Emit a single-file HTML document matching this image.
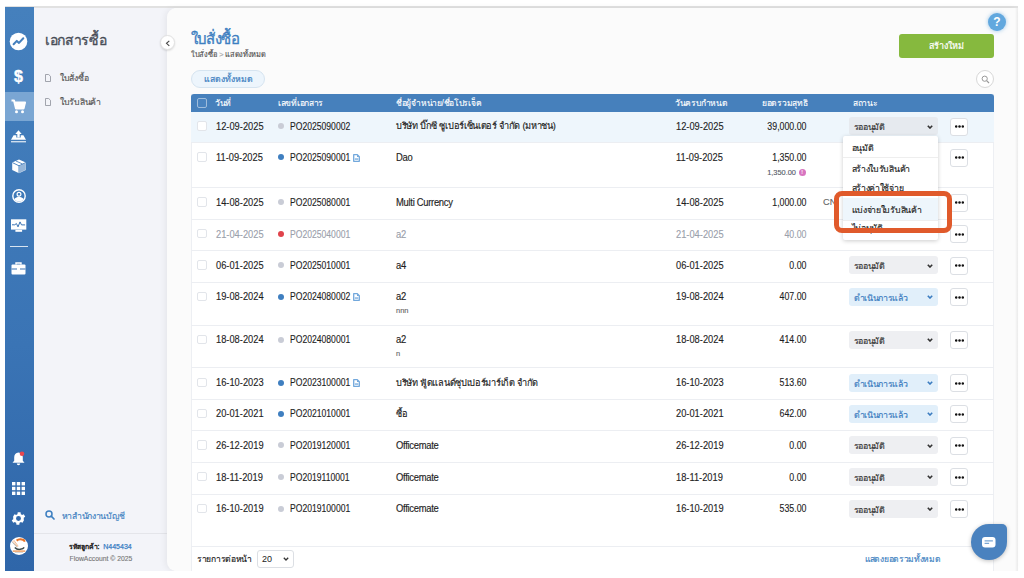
<!DOCTYPE html>
<html><head><meta charset="utf-8">
<style>
*{box-sizing:border-box;margin:0;padding:0}
html,body{width:1024px;height:578px;overflow:hidden;background:#fff;font-family:"Liberation Sans",sans-serif;color:#222}
.abs{position:absolute}
.t{position:absolute;font-size:9.2px;line-height:12px;white-space:nowrap;-webkit-text-stroke:0.12px currentColor}
.r{text-align:right}
.th{letter-spacing:-0.3px;-webkit-text-stroke:0.15px currentColor}
.cb{position:absolute;left:197px;width:9.5px;height:9.5px;border:1px solid #e2e5ea;border-radius:2px;background:#fff}
.dot{position:absolute;left:277.5px;width:6px;height:6px;border-radius:50%}
.sel{position:absolute;left:849px;width:89px;height:18px;border-radius:3px;font-size:8.8px;line-height:20px;-webkit-text-stroke:0.15px currentColor;padding-left:4.5px;white-space:nowrap;letter-spacing:-0.3px}
.chev{position:absolute;right:5.5px;top:7.5px;width:6px;height:4px}
.more{position:absolute;left:950px;width:18px;height:18px;border:1px solid #dcdfe4;border-radius:3px;background:#fff;display:flex;justify-content:center;align-items:center;gap:1px}
.more svg{display:block}
.ic{position:absolute;left:5px;width:29px}
</style></head><body>
<!-- frame top line -->
<div class="abs" style="left:5px;top:6px;width:1013px;height:2px;background:#e1e1e1"></div>
<!-- left icon bar -->
<div class="abs" style="left:5px;top:7px;width:29px;height:564px;background:linear-gradient(#4580bd,#3a74b5 60%,#2f66a9)"></div>
<div class="abs" style="left:5px;top:92px;width:29px;height:29px;background:#7aa6d3"></div>
<!-- icons -->
<svg class="abs" style="left:9px;top:32px" width="19" height="19" viewBox="0 0 19 19"><circle cx="9.5" cy="9.5" r="8.8" fill="#fff"/><path d="M4.6 12.3l3.2-3.4 2.2 2 4.3-4.6" fill="none" stroke="#4580bd" stroke-width="2" stroke-linecap="round" stroke-linejoin="round"/></svg>
<div class="abs" style="left:5px;top:68px;width:27px;text-align:center;color:#fff;font-weight:bold;font-size:16px;line-height:18px;-webkit-text-stroke:0.4px #fff">$</div>
<svg class="abs" style="left:11px;top:99px" width="15" height="15" viewBox="0 0 15 15"><path d="M0.5 1.5h2.5l2 8h7.5l1.5-6h-10" fill="none" stroke="#fff" stroke-width="2" stroke-linejoin="round"/><path d="M4 3.5h10.5l-1.5 6h-8z" fill="#fff"/><circle cx="5.5" cy="12.8" r="1.5" fill="#fff"/><circle cx="11.5" cy="12.8" r="1.5" fill="#fff"/></svg>
<svg class="abs" style="left:11px;top:129px" width="16" height="14" viewBox="0 0 16 14"><path d="M4.3 5L7.5 1.3 10.7 5z" fill="#fff"/><rect x="6.3" y="4.5" width="2.4" height="4" fill="#fff"/><path d="M0 10.7L2.6 6.2H5.3V8.6H9.7V6.2H12.4L15 10.7z" fill="#fff"/><rect x="0" y="12" width="15" height="1.4" fill="#fff" opacity=".75"/></svg>
<svg class="abs" style="left:11.5px;top:158.5px" width="15" height="15" viewBox="0 0 15 15"><path d="M7 0.5l6.8 3v7.5l-6.8 3.3-6.8-3.3v-7.5z" fill="#fff"/><path d="M0.4 3.6l6.6 3.2 6.8-3.3M7 6.8v7.5" fill="none" stroke="#3f7aba" stroke-width="0.9"/><path d="M7.6 7v6.7l6-3v-6.6z" fill="#3f7aba" opacity=".55"/><path d="M4 2l6.5 3" stroke="#3f7aba" stroke-width="0.8"/></svg>
<svg class="abs" style="left:11.5px;top:188.5px" width="14" height="14" viewBox="0 0 14 14"><defs><clipPath id="cpp"><circle cx="7" cy="7" r="5.6"/></clipPath></defs><circle cx="7" cy="7" r="6.2" fill="none" stroke="#fff" stroke-width="1.4"/><circle cx="7" cy="5.2" r="1.9" fill="none" stroke="#fff" stroke-width="1.2"/><ellipse cx="7" cy="13" rx="5.6" ry="5.2" fill="#fff" clip-path="url(#cpp)"/></svg>
<svg class="abs" style="left:11px;top:219px" width="16" height="14" viewBox="0 0 16 14"><rect x="0" y="0.3" width="15.3" height="10.3" fill="#fff"/><path d="M1 5.8h2.8l1.6-1.3 1.6 3.4 2-5 1.5 3h3.6" fill="none" stroke="#3a74b5" stroke-width="1"/><rect x="4.4" y="10.8" width="6.7" height="2" fill="#fff"/></svg>
<div class="abs" style="left:10px;top:246px;width:18px;height:1px;background:#fff;opacity:.8"></div>
<svg class="abs" style="left:11px;top:262px" width="15" height="13" viewBox="0 0 15 13"><path d="M5 2.5v-1.5h5v1.5" fill="none" stroke="#fff" stroke-width="1.4"/><rect x="0.5" y="2.5" width="14" height="10" rx="1" fill="#fff"/><rect x="0.5" y="6.5" width="14" height="1" fill="#3a74b5"/><rect x="6" y="5.5" width="3" height="3" fill="#fff"/></svg>
<svg class="abs" style="left:12px;top:451px" width="13" height="15" viewBox="0 0 13 15"><path d="M6.5 1.5c-2.8 0-4.3 2.2-4.3 4.8v3.5l-1.7 2h12l-1.7-2v-3.5c0-2.6-1.5-4.8-4.3-4.8z" fill="#fff"/><path d="M4.8 12.6a1.7 1.7 0 0 0 3.4 0z" fill="#fff"/><circle cx="10" cy="2.8" r="2.3" fill="#e8474f"/></svg>
<svg class="abs" style="left:12px;top:482px" width="13" height="13" viewBox="0 0 13 13"><g fill="#fff"><rect x="0" y="0" width="3.4" height="3.4"/><rect x="4.8" y="0" width="3.4" height="3.4"/><rect x="9.6" y="0" width="3.4" height="3.4"/><rect x="0" y="4.8" width="3.4" height="3.4"/><rect x="4.8" y="4.8" width="3.4" height="3.4"/><rect x="9.6" y="4.8" width="3.4" height="3.4"/><rect x="0" y="9.6" width="3.4" height="3.4"/><rect x="4.8" y="9.6" width="3.4" height="3.4"/><rect x="9.6" y="9.6" width="3.4" height="3.4"/></g></svg>
<svg class="abs" style="left:10px;top:510px" width="17" height="17" viewBox="0 0 24 24"><path fill="#fff" d="M19.4 13a7.8 7.8 0 0 0 0-2l2.1-1.6-2-3.5-2.5 1a7.3 7.3 0 0 0-1.7-1l-.4-2.7h-4l-.4 2.7a7.3 7.3 0 0 0-1.7 1l-2.5-1-2 3.5L4.6 11a7.8 7.8 0 0 0 0 2l-2.1 1.6 2 3.5 2.5-1a7.3 7.3 0 0 0 1.7 1l.4 2.7h4l.4-2.7a7.3 7.3 0 0 0 1.7-1l2.5 1 2-3.5zM12 15.5a3.5 3.5 0 1 1 0-7 3.5 3.5 0 0 1 0 7z"/></svg>
<svg class="abs" style="left:9.8px;top:537.3px" width="18" height="18" viewBox="0 0 18 18"><circle cx="9" cy="9" r="9" fill="#fff"/><path d="M6.6 3.6c1.5-1.3 4.5-1.6 7 -0.6 0.6 0.4 0.8 1 0.6 1.7" fill="none" stroke="#e8752a" stroke-width="2.2"/><path d="M4.8 10.4c1.5 1.6 3.5 2.2 5.5 1.9 1.8-0.3 3.3-1 3.9-2" fill="none" stroke="#3c4a4a" stroke-width="1.5"/><path d="M2.6 4l5 5.8M3.8 3.2l4.4 6" fill="none" stroke="#e9a06a" stroke-width="0.7"/><path d="M2.2 5.2l4.8 5" fill="none" stroke="#8a9090" stroke-width="0.6"/><rect x="2.8" y="13.4" width="12.4" height="1.4" fill="#ec9a5c"/><rect x="5" y="15.2" width="8" height="0.6" fill="#bbb"/></svg>

<!-- secondary sidebar -->
<div class="abs" style="left:34px;top:8px;width:140px;height:563px;background:#f3f4f9"></div>
<div class="abs" style="left:45px;top:31px;font-size:14px;line-height:18px;color:#474c57;white-space:nowrap;letter-spacing:-0.35px;-webkit-text-stroke:0.3px #474c57">เอกสารซื้อ</div>
<svg class="abs" style="left:45px;top:74px" width="6" height="8" viewBox="0 0 6 8"><path d="M0.5 0.5h3.2l1.8 1.8v5.2h-5z" fill="none" stroke="#8b8f99" stroke-width="0.8"/></svg>
<div class="t th" style="left:60px;top:72px;font-size:8.7px;color:#555">ใบสั่งซื้อ</div>
<svg class="abs" style="left:45px;top:97.5px" width="6" height="8" viewBox="0 0 6 8"><path d="M0.5 0.5h3.2l1.8 1.8v5.2h-5z" fill="none" stroke="#8b8f99" stroke-width="0.8"/></svg>
<div class="t th" style="left:60px;top:95.5px;font-size:8.7px;color:#555">ใบรับสินค้า</div>
<svg class="abs" style="left:45px;top:510px" width="10" height="10" viewBox="0 0 10 10"><circle cx="4" cy="4" r="3" fill="none" stroke="#3d7fc1" stroke-width="1.5"/><path d="M6.2 6.2l2.8 2.8" stroke="#3d7fc1" stroke-width="1.7" stroke-linecap="round"/></svg>
<div class="t th" style="left:61.5px;top:509.5px;font-size:8.7px;color:#3d7fc1">หาสำนักงานบัญชี</div>
<div class="abs" style="left:34px;top:533px;width:133px;height:1px;background:#e4e5ea"></div>
<div class="t" style="left:68.5px;top:540.5px;font-size:6.8px;color:#222;-webkit-text-stroke:0.35px #222">รหัสลูกค้า: <span style="color:#3b7fc4;margin-left:2px;-webkit-text-stroke:0.25px #3b7fc4;font-size:7px">N445434</span></div>
<div class="t" style="left:69.5px;top:553px;font-size:6.8px;color:#777">FlowAccount © 2025</div>

<!-- main panel -->
<div class="abs" style="left:167px;top:8px;width:850px;height:563px;background:#fbfbfb;border-radius:9px 0 0 9px;box-shadow:-2px 0 6px rgba(0,0,0,.06)"></div>
<div class="abs" style="left:1015px;top:8px;width:3px;height:563px;background:linear-gradient(to right,rgba(0,0,0,0),rgba(0,0,0,.07))"></div>
<!-- collapse btn -->
<div class="abs" style="left:159.5px;top:35px;width:15px;height:15px;border-radius:50%;background:#fff;border:1px solid #e2e2e2;box-shadow:0 1px 2px rgba(0,0,0,.12)"></div>
<svg class="abs" style="left:164.5px;top:39.5px" width="6" height="7" viewBox="0 0 6 7"><path d="M4.3 0.8L1.5 3.3 4.3 5.8" fill="none" stroke="#444" stroke-width="1.1"/></svg>
<!-- title -->
<div class="abs" style="left:190.5px;top:30px;font-size:15px;line-height:18px;color:#3d7fc1;white-space:nowrap;letter-spacing:-0.6px;-webkit-text-stroke:0.35px #3d7fc1">ใบสั่งซื้อ</div>
<div class="t th" style="left:191px;top:49px;font-size:7.4px;color:#555">ใบสั่งซื้อ<span style="color:#aaa;margin:0 2px 0 3px">&gt;</span>แสดงทั้งหมด</div>
<!-- green btn -->
<div class="abs" style="left:899px;top:34px;width:95px;height:24px;border-radius:3px;background:#86b93e;color:#fff;font-size:9px;line-height:24px;text-align:center;-webkit-text-stroke:0.2px #fff">สร้างใหม่</div>
<!-- help -->
<div class="abs" style="left:988px;top:13px;width:18px;height:18px;border-radius:50%;background:#62a8de;color:#fff;font-weight:bold;font-size:12px;line-height:18px;text-align:center;box-shadow:0 0 4px rgba(92,164,221,.6)">?</div>
<!-- pill -->
<div class="abs" style="left:191px;top:70px;width:74px;height:18px;border-radius:9px;background:#edf5fc;border:1px solid #d6e4f0;color:#3d7fc1;font-size:8.7px;line-height:16px;text-align:center;-webkit-text-stroke:0.2px #3d7fc1">แสดงทั้งหมด</div>
<!-- search circle -->
<div class="abs" style="left:976px;top:70px;width:18px;height:18px;border-radius:50%;background:#fff;border:1px solid #d8d8d8"></div>
<svg class="abs" style="left:981px;top:75px" width="9" height="9" viewBox="0 0 9 9"><circle cx="3.7" cy="3.7" r="2.6" fill="none" stroke="#999" stroke-width="1"/><path d="M5.6 5.6l2.4 2.4" stroke="#999" stroke-width="1.2"/></svg>

<!-- table -->
<div class="abs" style="left:191px;top:94px;width:803px;height:477px;background:#fff;border-left:1px solid #edeff3;border-right:1px solid #edeff3"></div>
<div class="abs" style="left:191px;top:94px;width:803px;height:17.5px;background:#4680bc;border-radius:3px 3px 0 0"></div>
<div class="abs" style="left:197px;top:98px;width:10px;height:10px;border:1px solid #9fbddc;border-radius:2px;background:#4a84c0"></div>
<div class="t th" style="left:215px;top:97px;color:#fff;font-size:8.5px;-webkit-text-stroke:0.1px #fff">วันที่</div>
<div class="t th" style="left:278px;top:97px;color:#fff;font-size:8.5px;-webkit-text-stroke:0.1px #fff">เลขที่เอกสาร</div>
<div class="t th" style="left:396px;top:97px;color:#fff;font-size:8.5px;-webkit-text-stroke:0.1px #fff">ชื่อผู้จำหน่าย/ชื่อโปรเจ็ค</div>
<div class="t th" style="left:675px;top:97px;color:#fff;font-size:8.5px;-webkit-text-stroke:0.1px #fff">วันครบกำหนด</div>
<div class="t th" style="left:762px;top:97px;color:#fff;font-size:8.5px;-webkit-text-stroke:0.1px #fff">ยอดรวมสุทธิ</div>
<div class="t th" style="left:853px;top:97px;color:#fff;font-size:8.5px;-webkit-text-stroke:0.1px #fff">สถานะ</div>
<!--row-->
<div class="abs" style="left:191px;top:112px;width:803px;height:30px;background:#eef6fc"></div>
<div class="abs" style="left:191px;top:142px;width:803px;height:1px;background:#eceef2"></div>
<div class="cb" style="top:121.2px"></div>
<div class="t" style="left:215.5px;top:120.9px;color:#1e1e1e;font-size:10px;transform:scaleX(.93);transform-origin:0 0">12-09-2025</div>
<div class="dot" style="top:123.2px;background:#c9ccd6"></div>
<div class="t po" style="left:289.5px;top:120.2px;color:#1e1e1e;font-size:10px;top:120.9px;transform:scaleX(.86);transform-origin:0 0">PO2025090002</div>
<div class="t th" style="left:396px;top:120.2px;color:#1e1e1e">บริษัท บิ๊กซี ซูเปอร์เซ็นเตอร์ จำกัด (มหาชน)</div>
<div class="t" style="left:675.5px;top:120.9px;color:#1e1e1e;font-size:10px;transform:scaleX(.93);transform-origin:0 0">12-09-2025</div>
<div class="t r" style="left:706px;width:100.5px;top:120.9px;color:#1e1e1e;font-size:10px;transform:scaleX(.88);transform-origin:100% 0">39,000.00</div>
<div class="sel" style="top:117.2px;background:#e6eaef;color:#333">รออนุมัติ<svg class="chev" viewBox="0 0 6 4"><path d="M0.8 0.8L3 3 5.2 0.8" fill="none" stroke="#333" stroke-width="1.6"/></svg></div>
<div class="more" style="top:117.7px"><svg width="9" height="3" viewBox="0 0 9 3"><circle cx="1.2" cy="1.5" r="1.25" fill="#111"/><circle cx="4.5" cy="1.5" r="1.25" fill="#111"/><circle cx="7.8" cy="1.5" r="1.25" fill="#111"/></svg></div>
<!--row-->
<div class="abs" style="left:191px;top:187px;width:803px;height:1px;background:#eceef2"></div>
<div class="cb" style="top:152.3px"></div>
<div class="t" style="left:215.5px;top:152.0px;color:#1e1e1e;font-size:10px;transform:scaleX(.93);transform-origin:0 0">11-09-2025</div>
<div class="dot" style="top:154.3px;background:#3f7fc0"></div>
<div class="t po" style="left:289.5px;top:151.3px;color:#1e1e1e;font-size:10px;top:152.0px;transform:scaleX(.86);transform-origin:0 0">PO2025090001</div>
<svg class="abs" style="left:353px;top:153.60000000000002px" width="7" height="8" viewBox="0 0 7 8"><path d="M0.7 0.7h3.6l2 2v4.6h-5.6z" fill="#fff" stroke="#72a8dc" stroke-width="1.3" stroke-linejoin="round"/><path d="M4 0.7v2.3h2.3z" fill="#72a8dc"/><rect x="1.8" y="4.4" width="3.4" height="1.3" fill="#72a8dc"/></svg>
<div class="t th" style="left:396px;top:152.0px;color:#1e1e1e;font-size:10px;transform:scaleX(.94);transform-origin:0 0">Dao</div>
<div class="t" style="left:675.5px;top:152.0px;color:#1e1e1e;font-size:10px;transform:scaleX(.93);transform-origin:0 0">11-09-2025</div>
<div class="t r" style="left:706px;width:100.5px;top:152.0px;color:#1e1e1e;font-size:10px;transform:scaleX(.88);transform-origin:100% 0">1,350.00</div>
<div class="t r" style="left:696px;width:100px;top:166.8px;color:#555a66;font-size:7.8px;transform:scaleX(.95);transform-origin:100% 0">1,350.00</div>
<div class="abs" style="left:798.5px;top:168.8px;width:7px;height:7px;border-radius:50%;background:#d875c0;color:#fff;font-size:5px;text-align:center;line-height:7px;font-weight:bold">!</div>
<div class="more" style="top:148.8px"><svg width="9" height="3" viewBox="0 0 9 3"><circle cx="1.2" cy="1.5" r="1.25" fill="#111"/><circle cx="4.5" cy="1.5" r="1.25" fill="#111"/><circle cx="7.8" cy="1.5" r="1.25" fill="#111"/></svg></div>
<!--row-->
<div class="abs" style="left:191px;top:219px;width:803px;height:1px;background:#eceef2"></div>
<div class="cb" style="top:197.2px"></div>
<div class="t" style="left:215.5px;top:196.89999999999998px;color:#1e1e1e;font-size:10px;transform:scaleX(.93);transform-origin:0 0">14-08-2025</div>
<div class="dot" style="top:199.2px;background:#c9ccd6"></div>
<div class="t po" style="left:289.5px;top:196.2px;color:#1e1e1e;font-size:10px;top:196.89999999999998px;transform:scaleX(.86);transform-origin:0 0">PO2025080001</div>
<div class="t th" style="left:396px;top:196.89999999999998px;color:#1e1e1e;font-size:10px;transform:scaleX(.94);transform-origin:0 0">Multi Currency</div>
<div class="t" style="left:675.5px;top:196.89999999999998px;color:#1e1e1e;font-size:10px;transform:scaleX(.93);transform-origin:0 0">14-08-2025</div>
<div class="t r" style="left:706px;width:100.5px;top:196.89999999999998px;color:#1e1e1e;font-size:10px;transform:scaleX(.88);transform-origin:100% 0">1,000.00</div>
<div class="t" style="left:823px;top:196.2px;color:#666">CN</div>
<div class="more" style="top:193.7px"><svg width="9" height="3" viewBox="0 0 9 3"><circle cx="1.2" cy="1.5" r="1.25" fill="#111"/><circle cx="4.5" cy="1.5" r="1.25" fill="#111"/><circle cx="7.8" cy="1.5" r="1.25" fill="#111"/></svg></div>
<!--row-->
<div class="abs" style="left:191px;top:250px;width:803px;height:1px;background:#eceef2"></div>
<div class="cb" style="top:228.8px"></div>
<div class="t" style="left:215.5px;top:228.5px;color:#9aa0ab;font-size:10px;transform:scaleX(.93);transform-origin:0 0">21-04-2025</div>
<div class="dot" style="top:230.8px;background:#e0434b"></div>
<div class="t po" style="left:289.5px;top:227.8px;color:#9aa0ab;font-size:10px;top:228.5px;transform:scaleX(.86);transform-origin:0 0">PO2025040001</div>
<div class="t th" style="left:396px;top:228.5px;color:#9aa0ab;font-size:10px;transform:scaleX(.94);transform-origin:0 0">a2</div>
<div class="t" style="left:675.5px;top:228.5px;color:#9aa0ab;font-size:10px;transform:scaleX(.93);transform-origin:0 0">21-04-2025</div>
<div class="t r" style="left:706px;width:100.5px;top:228.5px;color:#9aa0ab;font-size:10px;transform:scaleX(.88);transform-origin:100% 0">40.00</div>
<div class="more" style="top:225.3px"><svg width="9" height="3" viewBox="0 0 9 3"><circle cx="1.2" cy="1.5" r="1.25" fill="#111"/><circle cx="4.5" cy="1.5" r="1.25" fill="#111"/><circle cx="7.8" cy="1.5" r="1.25" fill="#111"/></svg></div>
<!--row-->
<div class="abs" style="left:191px;top:282px;width:803px;height:1px;background:#eceef2"></div>
<div class="cb" style="top:260.4px"></div>
<div class="t" style="left:215.5px;top:260.09999999999997px;color:#1e1e1e;font-size:10px;transform:scaleX(.93);transform-origin:0 0">06-01-2025</div>
<div class="dot" style="top:262.4px;background:#c9ccd6"></div>
<div class="t po" style="left:289.5px;top:259.4px;color:#1e1e1e;font-size:10px;top:260.09999999999997px;transform:scaleX(.86);transform-origin:0 0">PO2025010001</div>
<div class="t th" style="left:396px;top:260.09999999999997px;color:#1e1e1e;font-size:10px;transform:scaleX(.94);transform-origin:0 0">a4</div>
<div class="t" style="left:675.5px;top:260.09999999999997px;color:#1e1e1e;font-size:10px;transform:scaleX(.93);transform-origin:0 0">06-01-2025</div>
<div class="t r" style="left:706px;width:100.5px;top:260.09999999999997px;color:#1e1e1e;font-size:10px;transform:scaleX(.88);transform-origin:100% 0">0.00</div>
<div class="sel" style="top:256.4px;background:#eeeff2;color:#333">รออนุมัติ<svg class="chev" viewBox="0 0 6 4"><path d="M0.8 0.8L3 3 5.2 0.8" fill="none" stroke="#333" stroke-width="1.6"/></svg></div>
<div class="more" style="top:256.9px"><svg width="9" height="3" viewBox="0 0 9 3"><circle cx="1.2" cy="1.5" r="1.25" fill="#111"/><circle cx="4.5" cy="1.5" r="1.25" fill="#111"/><circle cx="7.8" cy="1.5" r="1.25" fill="#111"/></svg></div>
<!--row-->
<div class="abs" style="left:191px;top:325px;width:803px;height:1px;background:#eceef2"></div>
<div class="cb" style="top:291.6px"></div>
<div class="t" style="left:215.5px;top:291.3px;color:#1e1e1e;font-size:10px;transform:scaleX(.93);transform-origin:0 0">19-08-2024</div>
<div class="dot" style="top:293.6px;background:#3f7fc0"></div>
<div class="t po" style="left:289.5px;top:290.6px;color:#1e1e1e;font-size:10px;top:291.3px;transform:scaleX(.86);transform-origin:0 0">PO2024080002</div>
<svg class="abs" style="left:353px;top:292.90000000000003px" width="7" height="8" viewBox="0 0 7 8"><path d="M0.7 0.7h3.6l2 2v4.6h-5.6z" fill="#fff" stroke="#72a8dc" stroke-width="1.3" stroke-linejoin="round"/><path d="M4 0.7v2.3h2.3z" fill="#72a8dc"/><rect x="1.8" y="4.4" width="3.4" height="1.3" fill="#72a8dc"/></svg>
<div class="t th" style="left:396px;top:291.3px;color:#1e1e1e;font-size:10px;transform:scaleX(.94);transform-origin:0 0">a2</div>
<div class="t" style="left:396px;top:304.6px;color:#666;font-size:7.5px">nnn</div>
<div class="t" style="left:675.5px;top:291.3px;color:#1e1e1e;font-size:10px;transform:scaleX(.93);transform-origin:0 0">19-08-2024</div>
<div class="t r" style="left:706px;width:100.5px;top:291.3px;color:#1e1e1e;font-size:10px;transform:scaleX(.88);transform-origin:100% 0">407.00</div>
<div class="sel" style="top:287.6px;background:#e1effa;color:#3b7cc0">ดำเนินการแล้ว<svg class="chev" viewBox="0 0 6 4"><path d="M0.8 0.8L3 3 5.2 0.8" fill="none" stroke="#3b7cc0" stroke-width="1.6"/></svg></div>
<div class="more" style="top:288.1px"><svg width="9" height="3" viewBox="0 0 9 3"><circle cx="1.2" cy="1.5" r="1.25" fill="#111"/><circle cx="4.5" cy="1.5" r="1.25" fill="#111"/><circle cx="7.8" cy="1.5" r="1.25" fill="#111"/></svg></div>
<!--row-->
<div class="abs" style="left:191px;top:367px;width:803px;height:1px;background:#eceef2"></div>
<div class="cb" style="top:334.7px"></div>
<div class="t" style="left:215.5px;top:334.4px;color:#1e1e1e;font-size:10px;transform:scaleX(.93);transform-origin:0 0">18-08-2024</div>
<div class="dot" style="top:336.7px;background:#c9ccd6"></div>
<div class="t po" style="left:289.5px;top:333.7px;color:#1e1e1e;font-size:10px;top:334.4px;transform:scaleX(.86);transform-origin:0 0">PO2024080001</div>
<div class="t th" style="left:396px;top:334.4px;color:#1e1e1e;font-size:10px;transform:scaleX(.94);transform-origin:0 0">a2</div>
<div class="t" style="left:396px;top:347.7px;color:#666;font-size:7.5px">n</div>
<div class="t" style="left:675.5px;top:334.4px;color:#1e1e1e;font-size:10px;transform:scaleX(.93);transform-origin:0 0">18-08-2024</div>
<div class="t r" style="left:706px;width:100.5px;top:334.4px;color:#1e1e1e;font-size:10px;transform:scaleX(.88);transform-origin:100% 0">414.00</div>
<div class="sel" style="top:330.7px;background:#eeeff2;color:#333">รออนุมัติ<svg class="chev" viewBox="0 0 6 4"><path d="M0.8 0.8L3 3 5.2 0.8" fill="none" stroke="#333" stroke-width="1.6"/></svg></div>
<div class="more" style="top:331.2px"><svg width="9" height="3" viewBox="0 0 9 3"><circle cx="1.2" cy="1.5" r="1.25" fill="#111"/><circle cx="4.5" cy="1.5" r="1.25" fill="#111"/><circle cx="7.8" cy="1.5" r="1.25" fill="#111"/></svg></div>
<!--row-->
<div class="abs" style="left:191px;top:399px;width:803px;height:1px;background:#eceef2"></div>
<div class="cb" style="top:377.7px"></div>
<div class="t" style="left:215.5px;top:377.4px;color:#1e1e1e;font-size:10px;transform:scaleX(.93);transform-origin:0 0">16-10-2023</div>
<div class="dot" style="top:379.7px;background:#3f7fc0"></div>
<div class="t po" style="left:289.5px;top:376.7px;color:#1e1e1e;font-size:10px;top:377.4px;transform:scaleX(.86);transform-origin:0 0">PO2023100001</div>
<svg class="abs" style="left:353px;top:379.0px" width="7" height="8" viewBox="0 0 7 8"><path d="M0.7 0.7h3.6l2 2v4.6h-5.6z" fill="#fff" stroke="#72a8dc" stroke-width="1.3" stroke-linejoin="round"/><path d="M4 0.7v2.3h2.3z" fill="#72a8dc"/><rect x="1.8" y="4.4" width="3.4" height="1.3" fill="#72a8dc"/></svg>
<div class="t th" style="left:396px;top:376.7px;color:#1e1e1e">บริษัท ฟู้ดแลนด์ซุปเปอร์มาร์เก็ต จำกัด</div>
<div class="t" style="left:675.5px;top:377.4px;color:#1e1e1e;font-size:10px;transform:scaleX(.93);transform-origin:0 0">16-10-2023</div>
<div class="t r" style="left:706px;width:100.5px;top:377.4px;color:#1e1e1e;font-size:10px;transform:scaleX(.88);transform-origin:100% 0">513.60</div>
<div class="sel" style="top:373.7px;background:#e1effa;color:#3b7cc0">ดำเนินการแล้ว<svg class="chev" viewBox="0 0 6 4"><path d="M0.8 0.8L3 3 5.2 0.8" fill="none" stroke="#3b7cc0" stroke-width="1.6"/></svg></div>
<div class="more" style="top:374.2px"><svg width="9" height="3" viewBox="0 0 9 3"><circle cx="1.2" cy="1.5" r="1.25" fill="#111"/><circle cx="4.5" cy="1.5" r="1.25" fill="#111"/><circle cx="7.8" cy="1.5" r="1.25" fill="#111"/></svg></div>
<!--row-->
<div class="abs" style="left:191px;top:430px;width:803px;height:1px;background:#eceef2"></div>
<div class="cb" style="top:408.6px"></div>
<div class="t" style="left:215.5px;top:408.3px;color:#1e1e1e;font-size:10px;transform:scaleX(.93);transform-origin:0 0">20-01-2021</div>
<div class="dot" style="top:410.6px;background:#3f7fc0"></div>
<div class="t po" style="left:289.5px;top:407.6px;color:#1e1e1e;font-size:10px;top:408.3px;transform:scaleX(.86);transform-origin:0 0">PO2021010001</div>
<div class="t th" style="left:396px;top:407.6px;color:#1e1e1e">ซื้อ</div>
<div class="t" style="left:675.5px;top:408.3px;color:#1e1e1e;font-size:10px;transform:scaleX(.93);transform-origin:0 0">20-01-2021</div>
<div class="t r" style="left:706px;width:100.5px;top:408.3px;color:#1e1e1e;font-size:10px;transform:scaleX(.88);transform-origin:100% 0">642.00</div>
<div class="sel" style="top:404.6px;background:#e1effa;color:#3b7cc0">ดำเนินการแล้ว<svg class="chev" viewBox="0 0 6 4"><path d="M0.8 0.8L3 3 5.2 0.8" fill="none" stroke="#3b7cc0" stroke-width="1.6"/></svg></div>
<div class="more" style="top:405.1px"><svg width="9" height="3" viewBox="0 0 9 3"><circle cx="1.2" cy="1.5" r="1.25" fill="#111"/><circle cx="4.5" cy="1.5" r="1.25" fill="#111"/><circle cx="7.8" cy="1.5" r="1.25" fill="#111"/></svg></div>
<!--row-->
<div class="abs" style="left:191px;top:462px;width:803px;height:1px;background:#eceef2"></div>
<div class="cb" style="top:440.4px"></div>
<div class="t" style="left:215.5px;top:440.09999999999997px;color:#1e1e1e;font-size:10px;transform:scaleX(.93);transform-origin:0 0">26-12-2019</div>
<div class="dot" style="top:442.4px;background:#c9ccd6"></div>
<div class="t po" style="left:289.5px;top:439.4px;color:#1e1e1e;font-size:10px;top:440.09999999999997px;transform:scaleX(.86);transform-origin:0 0">PO2019120001</div>
<div class="t th" style="left:396px;top:440.09999999999997px;color:#1e1e1e;font-size:10px;transform:scaleX(.94);transform-origin:0 0">Officemate</div>
<div class="t" style="left:675.5px;top:440.09999999999997px;color:#1e1e1e;font-size:10px;transform:scaleX(.93);transform-origin:0 0">26-12-2019</div>
<div class="t r" style="left:706px;width:100.5px;top:440.09999999999997px;color:#1e1e1e;font-size:10px;transform:scaleX(.88);transform-origin:100% 0">0.00</div>
<div class="sel" style="top:436.4px;background:#eeeff2;color:#333">รออนุมัติ<svg class="chev" viewBox="0 0 6 4"><path d="M0.8 0.8L3 3 5.2 0.8" fill="none" stroke="#333" stroke-width="1.6"/></svg></div>
<div class="more" style="top:436.9px"><svg width="9" height="3" viewBox="0 0 9 3"><circle cx="1.2" cy="1.5" r="1.25" fill="#111"/><circle cx="4.5" cy="1.5" r="1.25" fill="#111"/><circle cx="7.8" cy="1.5" r="1.25" fill="#111"/></svg></div>
<!--row-->
<div class="abs" style="left:191px;top:494px;width:803px;height:1px;background:#eceef2"></div>
<div class="cb" style="top:471.8px"></div>
<div class="t" style="left:215.5px;top:471.5px;color:#1e1e1e;font-size:10px;transform:scaleX(.93);transform-origin:0 0">18-11-2019</div>
<div class="dot" style="top:473.8px;background:#c9ccd6"></div>
<div class="t po" style="left:289.5px;top:470.8px;color:#1e1e1e;font-size:10px;top:471.5px;transform:scaleX(.86);transform-origin:0 0">PO2019110001</div>
<div class="t th" style="left:396px;top:471.5px;color:#1e1e1e;font-size:10px;transform:scaleX(.94);transform-origin:0 0">Officemate</div>
<div class="t" style="left:675.5px;top:471.5px;color:#1e1e1e;font-size:10px;transform:scaleX(.93);transform-origin:0 0">18-11-2019</div>
<div class="t r" style="left:706px;width:100.5px;top:471.5px;color:#1e1e1e;font-size:10px;transform:scaleX(.88);transform-origin:100% 0">0.00</div>
<div class="sel" style="top:467.8px;background:#eeeff2;color:#333">รออนุมัติ<svg class="chev" viewBox="0 0 6 4"><path d="M0.8 0.8L3 3 5.2 0.8" fill="none" stroke="#333" stroke-width="1.6"/></svg></div>
<div class="more" style="top:468.3px"><svg width="9" height="3" viewBox="0 0 9 3"><circle cx="1.2" cy="1.5" r="1.25" fill="#111"/><circle cx="4.5" cy="1.5" r="1.25" fill="#111"/><circle cx="7.8" cy="1.5" r="1.25" fill="#111"/></svg></div>
<!--row-->
<div class="cb" style="top:503.6px"></div>
<div class="t" style="left:215.5px;top:503.3px;color:#1e1e1e;font-size:10px;transform:scaleX(.93);transform-origin:0 0">16-10-2019</div>
<div class="dot" style="top:505.6px;background:#c9ccd6"></div>
<div class="t po" style="left:289.5px;top:502.6px;color:#1e1e1e;font-size:10px;top:503.3px;transform:scaleX(.86);transform-origin:0 0">PO2019100001</div>
<div class="t th" style="left:396px;top:503.3px;color:#1e1e1e;font-size:10px;transform:scaleX(.94);transform-origin:0 0">Officemate</div>
<div class="t" style="left:675.5px;top:503.3px;color:#1e1e1e;font-size:10px;transform:scaleX(.93);transform-origin:0 0">16-10-2019</div>
<div class="t r" style="left:706px;width:100.5px;top:503.3px;color:#1e1e1e;font-size:10px;transform:scaleX(.88);transform-origin:100% 0">535.00</div>
<div class="sel" style="top:499.6px;background:#eeeff2;color:#333">รออนุมัติ<svg class="chev" viewBox="0 0 6 4"><path d="M0.8 0.8L3 3 5.2 0.8" fill="none" stroke="#333" stroke-width="1.6"/></svg></div>
<div class="more" style="top:500.1px"><svg width="9" height="3" viewBox="0 0 9 3"><circle cx="1.2" cy="1.5" r="1.25" fill="#111"/><circle cx="4.5" cy="1.5" r="1.25" fill="#111"/><circle cx="7.8" cy="1.5" r="1.25" fill="#111"/></svg></div>
<!-- footer -->
<div class="abs" style="left:191px;top:546px;width:803px;height:1px;background:#eceef2"></div>
<div class="t th" style="left:197px;top:553px;font-size:8.5px;color:#222">รายการต่อหน้า</div>
<div class="abs" style="left:257px;top:550px;width:37px;height:17.5px;border:1px solid #dcdfe4;border-radius:3px;background:#fff;font-size:9px;line-height:16px;padding-left:4px">20</div>
<svg class="abs" style="left:283px;top:557px" width="6" height="4" viewBox="0 0 6 4"><path d="M0.8 0.8l2.2 2.2 2.2-2.2" fill="none" stroke="#333" stroke-width="1.3"/></svg>
<div class="t th" style="left:865px;top:553px;font-size:8.5px;color:#3d7fc1">แสดงยอดรวมทั้งหมด</div>
<!-- bottom white strip -->
<div class="abs" style="left:0;top:571px;width:1024px;height:7px;background:#fff"></div>

<!-- dropdown menu -->
<div class="abs" style="left:842.5px;top:136px;width:95px;height:104px;background:#fff;border-radius:2px;box-shadow:0 1px 4px rgba(0,0,0,.2)"></div>
<div class="t th" style="left:851.5px;top:141.5px;font-size:8.7px;color:#222">อนุมัติ</div>
<div class="abs" style="left:842.5px;top:157px;width:95px;height:1px;background:#eee"></div>
<div class="t th" style="left:851.5px;top:162.5px;font-size:8.7px;color:#222">สร้างใบรับสินค้า</div>
<div class="t th" style="left:851.5px;top:182px;font-size:8.7px;color:#222">สร้างค่าใช้จ่าย</div>
<div class="abs" style="left:842.5px;top:197.5px;width:95px;height:22px;background:#eef6fc"></div>
<div class="abs" style="left:842.5px;top:219.5px;width:95px;height:1px;background:#eee"></div>
<div class="t th" style="left:851.5px;top:203.5px;font-size:8.7px;color:#222">แบ่งจ่ายใบรับสินค้า</div>
<div class="t th" style="left:851.5px;top:222px;font-size:8.7px;color:#222">ไม่อนุมัติ</div>
<!-- orange highlight -->
<div class="abs" style="left:834px;top:191px;width:118px;height:42px;border:5px solid #e05a2b;border-radius:8px"></div>

<!-- chat bubble -->
<div class="abs" style="left:970.5px;top:524px;width:36px;height:36px;border-radius:50% 5px 50% 50%;background:#4a82bf;box-shadow:0 1px 4px rgba(0,0,0,.25)"></div>
<svg class="abs" style="left:982px;top:537px" width="14" height="11" viewBox="0 0 14 11"><rect x="0" y="0" width="13.5" height="10.4" rx="3" fill="#fff"/><path d="M2.6 3.8h8.3M2.6 6.4h4.5" stroke="#7aa6d4" stroke-width="1.2"/></svg>
</body></html>
